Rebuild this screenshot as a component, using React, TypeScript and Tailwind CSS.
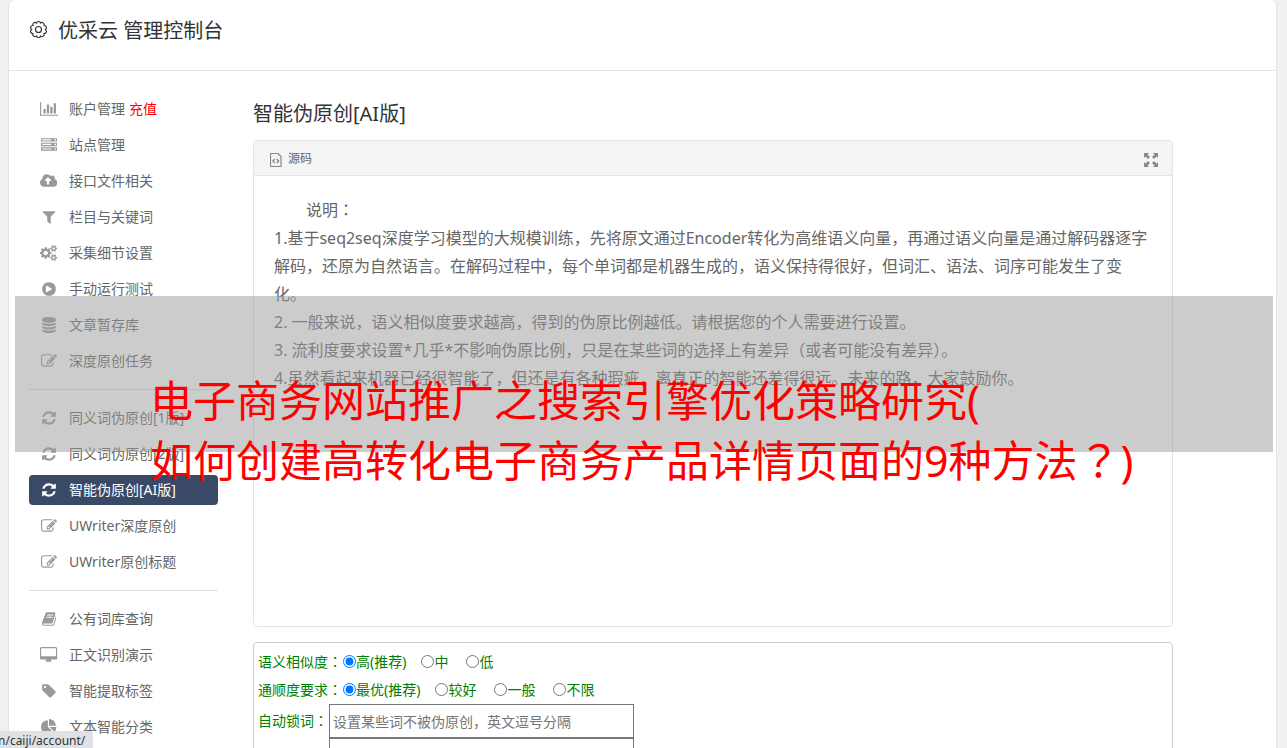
import React from "react";

type Icon = { box: string; path: string };

const icons: Record<string, Icon> = {
  chart: { box: "0 0 2048 1792", path: "M640 896v512H384V896h256zm384-512v1024H768V384h256zm1024 1152v128H0V128h128v1408h1920zm-640-896v768h-256V640h256zm384-384v1152h-256V256h256z" },
  server: { box: "0 0 1792 1792", path: "M128 1408h1024v-128H128v128zm0-512h1024V768H128v128zm1568 448q0-40-28-68t-68-28-68 28-28 68 28 68 68 28 68-28 28-68zM128 384h1024V256H128v128zm1568 448q0-40-28-68t-68-28-68 28-28 68 28 68 68 28 68-28 28-68zm0-512q0-40-28-68t-68-28-68 28-28 68 28 68 68 28 68-28 28-68zm96 832v384H0v-384h1792zm0-512v384H0V640h1792zm0-512v384H0V128h1792z" },
  upload: { box: "0 0 1920 1792", path: "M1280 864q0-14-9-23l-352-352q-9-9-23-9t-23 9l-351 351q-10 12-10 24 0 14 9 23t23 9h224v352q0 13 9.5 22.5t22.5 9.5h192q13 0 22.5-9.5t9.5-22.5V896h224q13 0 22.5-9.5t9.5-22.5zm640 288q0 159-112.5 271.5T1536 1536H448q-185 0-316.5-131.5T0 1088q0-130 70-240t188-165q-2-30-2-43 0-212 150-362t362-150q156 0 285.5 87T1242 346q71-62 166-62 106 0 181 75t75 181q0 76-41 138 130 31 213.5 135.5T1920 1152z" },
  filter: { box: "0 0 1792 1792", path: "M1595 295q17 41-14 70l-493 493v742q0 42-39 59-13 5-25 5-27 0-45-19l-256-256q-19-19-19-45V858L211 365q-31-29-14-70 17-39 59-39h1280q42 0 59 39z" },
  cogs: { box: "0 0 1920 1792", path: "M896 896q0-106-75-181t-181-75-181 75-75 181 75 181 181 75 181-75 75-181zm768 512q0-52-38-90t-90-38-90 38-38 90q0 53 37.500 90.500t90.500 37.500 90.500-37.500 37.500-90.500zm0-1024q0-52-38-90t-90-38-90 38-38 90q0 53 37.500 90.500T1536 512t90.500-37.500T1664 384zm-384 421v185q0 10-7 19.500t-16 10.500l-155 24q-11 35-32 76 34 48 90 115 7 11 7 20 0 12-7 19-23 30-82.500 89.500T999 1423q-11 0-21-7l-115-90q-37 19-77 31-11 108-23 155-7 24-30 24H547q-11 0-20-7.500t-10-17.500l-23-153q-34-10-75-31l-118 89q-7 7-20 7-11 0-21-8-144-133-144-160 0-9 7-19 10-14 41-53t47-61q-23-44-35-82l-152-24q-10-1-17-9.500T0 987V802q0-10 7-19.500T23 772l155-24q11-35 32-76-34-48-90-115-7-11-7-20 0-12 7-20 22-30 82-89t79-59q11 0 21 7l115 90q34-18 77-32 11-108 23-154 7-24 30-24h186q11 0 20 7.500t10 17.500l23 153q34 10 75 31l118-89q8-7 20-7 11 0 21 8 144 133 144 160 0 9-7 19-12 16-42 54t-45 60q23 48 34 82l152 23q10 2 17 10.500t7 19.500zm640 533v140q0 16-149 31-12 27-30 52 51 113 51 138 0 4-4 7-122 71-124 71-8 0-46-47t-52-68q-20 2-30 2t-30-2q-14 21-52 68t-46 47q-2 0-124-71-4-3-4-7 0-25 51-138-18-25-30-52-149-15-149-31v-140q0-16 149-31 13-29 30-52-51-113-51-138 0-4 4-7 4-2 35-20t59-34 30-16q8 0 46 46.500t52 67.500q20-2 30-2t30 2q51-71 92-112l6-2q4 0 124 70 4 3 4 7 0 25-51 138 17 23 30 52 149 15 149 31zm0-1024v140q0 16-149 31-12 27-30 52 51 113 51 138 0 4-4 7-122 71-124 71-8 0-46-47t-52-68q-20 2-30 2t-30-2q-14 21-52 68t-46 47q-2 0-124-71-4-3-4-7 0-25 51-138-18-25-30-52-149-15-149-31V314q0-16 149-31 13-29 30-52-51-113-51-138 0-4 4-7 4-2 35-20t59-34 30-16q8 0 46 46.500t52 67.500q20-2 30-2t30 2q51-71 92-112l6-2q4 0 124 70 4 3 4 7 0 25-51 138 17 23 30 52 149 15 149 31z" },
  play: { box: "0 0 1792 1792", path: "M1216 896q0-37-32-55L640 521q-31-19-64-1-32 19-32 56v640q0 37 32 56 16 8 32 8 17 0 32-9l544-320q32-18 32-55zm448 0q0 209-103 385.500T1281.500 1561 896 1664t-385.500-103T231 1281.500 128 896t103-385.500T510.500 231 896 128t385.500 103T1561 510.500 1664 896z" },
  database: { box: "0 0 1792 1792", path: "M896 768q237 0 443-43t325-127v170q0 69-103 128t-280 93.500-385 34.500-385-34.500T231 896 128 768V598q119 84 325 127t443 43zm0 768q237 0 443-43t325-127v170q0 69-103 128t-280 93.500-385 34.500-385-34.500-280-93.500-103-128v-170q119 84 325 127t443 43zm0-384q237 0 443-43t325-127v170q0 69-103 128t-280 93.500-385 34.500-385-34.500-280-93.500-103-128V982q119 84 325 127t443 43zM896 0q208 0 385 34.500t280 93.500 103 128v128q0 69-103 128t-280 93.500T896 640t-385-34.500T231 512 128 384V256q0-69 103-128t280-93.500T896 0z" },
  edit: { box: "0 0 1792 1792", path: "M888 1184l116-116-152-152-116 116v56h96v96h56zm440-720q-16-16-33 1L945 815q-17 17-1 33t33-1l350-350q17-17 1-33zm80 594v190q0 119-84.500 203.500T1120 1536H288q-119 0-203.500-84.500T0 1248V416q0-119 84.500-203.500T288 128h832q63 0 117 25 15 7 18 23 3 17-9 29l-49 49q-14 14-32 8-23-6-45-6H288q-66 0-113 47t-47 113v832q0 66 47 113t113 47h832q66 0 113-47t47-113v-126q0-13 9-22l64-64q15-15 35-7t20 29zm-96-738l288 288-672 672H640V992zm444 132l-92 92-288-288 92-92q28-28 68-28t68 28l152 152q28 28 28 68t-28 68z" },
  refresh: { box: "0 0 1792 1792", path: "M1639 1056q0 5-1 7-64 268-268 434.500T892 1664q-146 0-282.500-55T366 1452l-129 129q-19 19-45 19t-45-19-19-45v-448q0-26 19-45t45-19h448q26 0 45 19t19 45-19 45l-137 137q71 66 161 102t187 36q134 0 250-65t186-179q11-17 53-117 8-23 30-23h192q13 0 22.500 9.500t9.500 22.500zm25-800v448q0 26-19 45t-45 19h-448q-26 0-45-19t-19-45 19-45l138-138Q1097 384 896 384q-134 0-250 65T460 628q-11 17-53 117-8 23-30 23H178q-13 0-22.500-9.500T146 736v-7q65-268 270-434.500T896 128q146 0 284 55.500T1425 340l130-129q19-19 45-19t45 19 19 45z" },
  book: { box: "0 0 1664 1792", path: "M1639 478q40 57 18 129l-275 906q-19 64-76.500 107.500T1183 1664H260q-77 0-148.500-53.500T12 1479q-24-67-2-127 0-4 3-27t4-37q1-8-3-21.500t-3-19.500q2-11 8-21t16.500-23.500T52 1179q23-38 45-91.500t30-91.500q3-10 .5-30t-.5-28q3-11 17-28t17-23q21-36 42-92t25-90q1-9-2.500-32t.5-28q4-13 22-30.500t22-22.500q19-26 42.500-84.500T340 411q1-8-3-25.500t-2-26.500q2-8 9-18t18-23 17-21q8-12 16.500-30.500t15-35 16-36 19.500-32 26.500-23.500 36-11.500T556 134l-1 3q38-9 51-9h761q74 0 114 56t18 130l-274 906q-36 119-71.500 153.500T1025 1408H156q-27 0-38 15-11 16-1 43 24 70 144 70h923q29 0 56-15.500t35-41.500l300-987q7-22 5-57 38 15 59 43zm-1064 2q-4 13 2 22.500t20 9.500h608q13 0 25.500-9.500T1247 480l21-64q4-13-2-22.500t-20-9.500H638q-13 0-25.500 9.500T596 416zm-83 256q-4 13 2 22.500t20 9.500h608q13 0 25.500-9.500T1164 736l21-64q4-13-2-22.500t-20-9.500H555q-13 0-25.500 9.500T513 672z" },
  desktop: { box: "0 0 1920 1792", path: "M1792 992V160q0-13-9.500-22.500T1760 128H160q-13 0-22.500 9.500T128 160v832q0 13 9.500 22.500t22.500 9.500h1600q13 0 22.500-9.500t9.500-22.500zm128-832v1088q0 66-47 113t-113 47h-544q0 37 16 77.500t32 71 16 43.500q0 26-19 45t-45 19H704q-26 0-45-19t-19-45q0-14 16-44t32-70 16-78H160q-66 0-113-47T0 1248V160Q0 94 47 47T160 0h1600q66 0 113 47t47 113z" },
  tag: { box: "0 0 1792 1792", path: "M576 448q0-53-37.500-90.500T448 320t-90.500 37.500T320 448t37.500 90.500T448 576t90.500-37.500T576 448zm1067 576q0 53-37 90l-491 492q-39 37-91 37-53 0-90-37L219 890q-38-37-64.500-101T128 672V256q0-52 38-90t90-38h416q53 0 117 26.500T891 219l715 714q37 39 37 91z" },
  pie: { box: "0 0 1728 1792", path: "M768 890l546 546q-106 108-247.500 168T768 1664q-209 0-385.500-103T103 1281.500 0 896t103-385.500T382.500 231 768 128v762zm187 6h773q0 157-60 298.500T1500 1442zm709-128H896V0q209 0 385.500 103T1561 382.500 1664 768z" },
};

type Item = { icon: keyof typeof icons; label: string; extra?: string; active?: boolean };

const groups: Item[][] = [
  [
    { icon: "chart", label: "账户管理", extra: "充值" },
    { icon: "server", label: "站点管理" },
    { icon: "upload", label: "接口文件相关" },
    { icon: "filter", label: "栏目与关键词" },
    { icon: "cogs", label: "采集细节设置" },
    { icon: "play", label: "手动运行测试" },
    { icon: "database", label: "文章暂存库" },
    { icon: "edit", label: "深度原创任务" },
  ],
  [
    { icon: "refresh", label: "同义词伪原创[1版]" },
    { icon: "refresh", label: "同义词伪原创[2版]" },
    { icon: "refresh", label: "智能伪原创[AI版]", active: true },
    { icon: "edit", label: "UWriter深度原创" },
    { icon: "edit", label: "UWriter原创标题" },
  ],
  [
    { icon: "book", label: "公有词库查询" },
    { icon: "desktop", label: "正文识别演示" },
    { icon: "tag", label: "智能提取标签" },
    { icon: "pie", label: "文本智能分类" },
  ],
];

// Sets colons and question marks in the middle of their full-width cell.
function Centered({ text }: { text: string }) {
  return (
    <>
      {text.split(/([：？])/).map((part, i) =>
        i % 2 ? (
          <span key={i} lang="zh-TW" className="font-['Noto_Sans_CJK_TC',sans-serif] leading-none">
            {part}
          </span>
        ) : (
          part
        ),
      )}
    </>
  );
}

function NavItem({ item }: { item: Item }) {
  const icon = icons[item.icon];
  return (
    <li>
      <a
        href="#"
        className={
          item.active
            ? "flex h-[30px] items-center rounded bg-[#3a4a66] pl-2.5 text-white"
            : "flex h-[30px] items-center rounded pl-2.5 text-[#666]"
        }
      >
        <span className={item.active ? "flex w-5 justify-center text-white" : "flex w-5 justify-center text-[#999]"}>
          <svg viewBox={icon.box} className="h-4 w-auto" fill="currentColor" aria-hidden="true">
            <path d={icon.path} />
          </svg>
        </span>
        <span className="ml-2.5 whitespace-nowrap">
          {item.label}
          {item.extra && <span className="ml-1 text-[#f00]">{item.extra}</span>}
        </span>
      </a>
    </li>
  );
}

function RadioRow({ title, name, options }: { title: string; name: string; options: string[] }) {
  return (
    <div role="radiogroup" aria-label={title} className="flex h-7 items-center">
      <span className="w-[85px]">
        <Centered text={title} />
      </span>
      {options.map((o, i) => (
        <label key={o} className={i === 0 ? "mr-[15px] flex items-center" : "mr-[18px] flex items-center"}>
          <input type="radio" name={name} defaultChecked={i === 0} className="mb-0.5 h-[13px] w-[13px]" />
          {o}
        </label>
      ))}
    </div>
  );
}

export default function App() {
  return (
    <div className="relative h-screen overflow-hidden bg-[#f0f0f0] pr-2.5 pl-2 font-['Noto_Sans','Noto_Sans_CJK_SC',sans-serif] text-sm text-[#666]">
      <div className="min-h-full rounded-t-md border-x border-[#e4e4e4] bg-white">
        <header className="flex h-[71px] items-start border-b border-[#e4e4e4] pt-4 pl-5 text-[#333]">
          <svg viewBox="0 0 24 24" className="mt-1 h-[19px] w-[19px]" fill="none" stroke="currentColor" strokeWidth="1.5" strokeLinejoin="round" aria-hidden="true">
            <circle cx="12" cy="12" r="3.8" />
            <path d="M9.400 4A2.650 2.650 0 0 1 14.600 4A2.650 2.650 0 0 1 18.900 7A2.650 2.650 0 0 1 20.500 12A2.650 2.650 0 0 1 18.900 17A2.650 2.650 0 0 1 14.600 20A2.650 2.650 0 0 1 9.400 20A2.650 2.650 0 0 1 5.100 17A2.650 2.650 0 0 1 3.500 12A2.650 2.650 0 0 1 5.100 7A2.650 2.650 0 0 1 9.400 4Z" />
          </svg>
          <h1 className="ml-2.5 text-xl leading-[30px]">优采云 管理控制台</h1>
        </header>

        <div className="flex">
          <nav className="w-[209px] shrink-0 pt-[23px] pl-5">
            {groups.map((g, i) => (
              <ul key={i} className={i ? "mt-[13px] flex flex-col gap-1.5 border-t border-[#ddd] pt-[13px]" : "flex flex-col gap-1.5"}>
                {g.map((item) => (
                  <NavItem key={item.label} item={item} />
                ))}
              </ul>
            ))}
          </nav>

          <main className="mr-[103px] ml-[35px] min-w-0 flex-1 pt-7">
            <h2 className="text-xl leading-[30px] text-[#333]">智能伪原创[AI版]</h2>
            <section className="mt-[11px] min-h-[487px] rounded border border-[#e4e4e4]">
              <div className="flex h-[35px] items-center rounded-t border-b border-[#e4e4e4] bg-[#f4f4f4] pr-3.5 pl-4">
                <button type="button" className="flex items-center gap-1.5 pt-0.5 text-xs">
                  <svg viewBox="0 0 12 14" className="mt-0.5 h-3.5 w-3" fill="none" stroke="#888" aria-hidden="true">
                    <path d="M.5.5h7.500l3 3v10H.5z" strokeWidth="1.2" />
                    <path d="M4.800 6L2.800 8l2 2M6.700 6l2 2-2 2" strokeWidth="1.300" />
                  </svg>
                  源码
                </button>
                <button type="button" aria-label="全屏" className="mt-1 ml-auto">
                  <svg viewBox="0 0 14 14" className="h-3.5 w-3.5" fill="#888" aria-hidden="true">
                    <path d="M0 0h5L3.500 1.500 6 4 4 6 1.500 3.500 0 5zM14 0v5l-1.500-1.500L10 6 8 4l2.500-2.500L9 0zM0 14V9l1.500 1.500L4 8l2 2-2.500 2.500L5 14zM14 14H9l1.500-1.500L8 10l2-2 2.500 2.500L14 9z" />
                  </svg>
                </button>
              </div>
              <div className="px-5 pt-5 text-base leading-7">
                <p className="indent-8">
                  <Centered text="说明：" />
                </p>
                <p>1.基于seq2seq深度学习模型的大规模训练，先将原文通过Encoder转化为高维语义向量，再通过语义向量是通过解码器逐字解码，还原为自然语言。在解码过程中，每个单词都是机器生成的，语义保持得很好，但词汇、语法、词序可能发生了变化。</p>
                <p>2. 一般来说，语义相似度要求越高，得到的伪原比例越低。请根据您的个人需要进行设置。</p>
                <p>3. 流利度要求设置*几乎*不影响伪原比例，只是在某些词的选择上有差异（或者可能没有差异）。</p>
                <p>4.虽然看起来机器已经很智能了，但还是有各种瑕疵，离真正的智能还差得很远。未来的路，大家鼓励你。</p>
              </div>
            </section>

            <section className="mt-[15px] rounded border border-[#ccc] py-[5px] pl-1 text-[green]">
              <RadioRow title="语义相似度：" name="similarity" options={["高(推荐)", "中", "低"]} />
              <RadioRow title="通顺度要求：" name="fluency" options={["最优(推荐)", "较好", "一般", "不限"]} />
              <div className="flex">
                <label htmlFor="locked" className="w-[71px] leading-[34px]">
                  <Centered text="自动锁词：" />
                </label>
                <div className="flex flex-col">
                  <input id="locked" placeholder="设置某些词不被伪原创，英文逗号分隔" className="h-[34px] w-[305px] border border-[#767676] px-[3px] text-[#666] placeholder:text-[#757575]" />
                  <textarea aria-label="锁词列表" className="h-20 w-[305px] resize-none border border-[#767676]" />
                </div>
              </div>
            </section>
          </main>
        </div>
      </div>

      <div className="absolute top-[296px] right-3.5 left-[15px] h-[156px] bg-[#999]/50" />
      <p className="absolute top-[371px] left-[150px] text-[43px] leading-[60px] whitespace-nowrap text-[#f00]">
        电子商务网站推广之搜索引擎优化策略研究(
        <br />
        <Centered text="如何创建高转化电子商务产品详情页面的9种方法？)" />
      </p>
      <div className="absolute bottom-0 left-0 h-[17px] rounded-tr bg-[#dee1e6] pr-2 text-xs leading-5 text-[#333]">
        <span className="-ml-0.5">n/caiji/account/</span>
      </div>
    </div>
  );
}
